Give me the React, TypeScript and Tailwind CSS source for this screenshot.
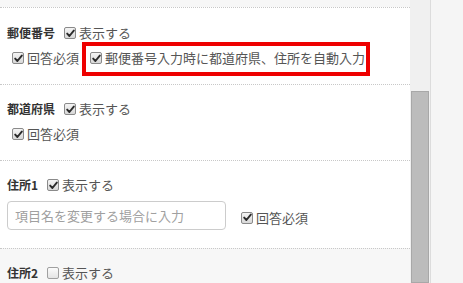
import React from "react";

const font = { fontFamily: '"Noto Sans CJK JP", "Noto Sans", sans-serif' };

function Box({ checked }: { checked: boolean }) {
  return (
    <span
      className={
        "inline-flex h-[12px] w-[12px] shrink-0 items-center justify-center rounded-[2px] border " +
        (checked
          ? "border-[#8a8a8a] bg-gradient-to-b from-[#f4f4f4] to-[#d8d8d8]"
          : "border-[#a0a0a0] bg-gradient-to-b from-[#fbfbfb] to-[#e4e4e4]")
      }
    >
      {checked && (
        <svg width="9" height="9" viewBox="0 0 9 9">
          <path d="M1.2 4.6 L3.4 7 L7.8 1.6" fill="none" stroke="#2a2a2a" strokeWidth="1.9" strokeLinecap="round" strokeLinejoin="round" />
        </svg>
      )}
    </span>
  );
}

function Check({ checked, label }: { checked: boolean; label: string }) {
  return (
    <span className="inline-flex items-center gap-[3px] text-[13px] leading-5 text-[#555]">
      <Box checked={checked} />
      <span>{label}</span>
    </span>
  );
}

function Header({ title, checked }: { title: string; checked: boolean }) {
  return (
    <div className="flex h-5 items-center pl-[7px]">
      <span className="mr-[9px] text-[12px] font-bold text-[#333]">{title}</span>
      <Check checked={checked} label="表示する" />
    </div>
  );
}

export default function App() {
  return (
    <div className="flex h-[283px] w-[463px] overflow-hidden bg-[#f5f5f5]" style={font}>
      <div className="flex w-[410px] flex-col">
        <div className="h-[8px] bg-[#f7f7f7]" />
        <div className="border-t border-dotted border-[#c8c8c8] bg-white pt-[15px] pb-[16px]">
          <Header title="郵便番号" checked />
          <div className="mt-[5px] flex h-5 items-center pl-[12px]">
            <Check checked label="回答必須" />
            <span className="relative ml-[11px] inline-flex">
              <span className="pointer-events-none absolute -left-[8px] -right-[5px] -top-[6px] -bottom-[8px] border-[4px] border-[#ee0000]" />
              <Check checked label="郵便番号入力時に都道府県、住所を自動入力" />
            </span>
          </div>
        </div>
        <div className="border-t border-dotted border-[#c8c8c8] bg-white pt-[14px] pb-[16px]">
          <Header title="都道府県" checked />
          <div className="mt-[5px] flex h-5 items-center pl-[12px]">
            <Check checked label="回答必須" />
          </div>
        </div>
        <div className="border-t border-dotted border-[#c8c8c8] bg-white pt-[14px] pb-[18px]">
          <Header title="住所1" checked />
          <div className="mt-[6px] flex items-center pl-[7px]">
            <input
              className="h-[29px] w-[219px] rounded-[4px] border border-[#cccccc] px-[7px] text-[13px] text-[#555] placeholder-[#a0a0a0] outline-none"
              placeholder="項目名を変更する場合に入力"
              style={font}
            />
            <span className="ml-[15px]">
              <Check checked label="回答必須" />
            </span>
          </div>
        </div>
        <div className="flex-1 border-t border-dotted border-[#c8c8c8] bg-[#f7f7f7] pt-[14px]">
          <Header title="住所2" checked={false} />
        </div>
      </div>
      <div className="flex w-[20px] flex-col bg-[#f0f0f0]">
        <div className="h-[91px]" />
        <div className="mx-[1px] flex-1 border border-[#a8a8a8] bg-[#bcbcbc]" />
      </div>
      <div className="w-[1px] bg-[#dcdcdc]" />
      <div className="flex-1 bg-[#f5f5f5]" />
    </div>
  );
}
